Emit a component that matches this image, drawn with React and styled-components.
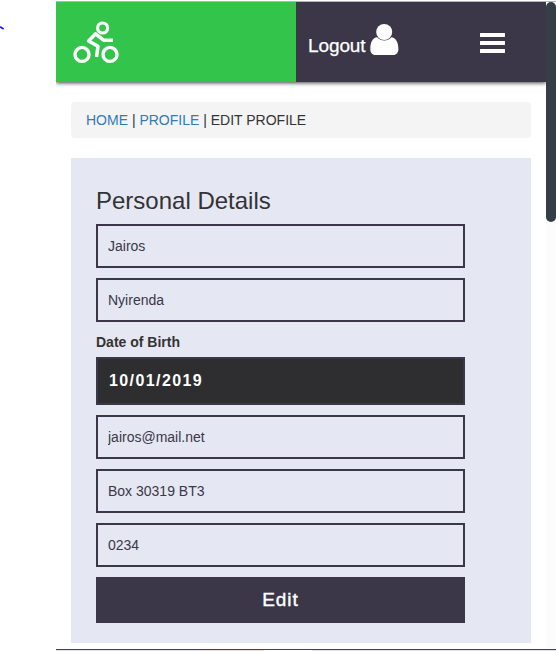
import React from "react";
import styled, { createGlobalStyle } from "styled-components";

const ink = "#3b3748";

const GlobalStyle = createGlobalStyle`
  *, *::before, *::after { box-sizing: border-box; }
  html, body { margin: 0; padding: 0; background: #fff; overflow: hidden; }
  body { font-family: "Liberation Sans", Arial, sans-serif; font-size: 14px; line-height: 20px; color: #333; }
`;

const Screen = styled.div`
  display: flex;
  width: 556px;
  height: 651px;
  overflow: hidden;
`;

const Gutter = styled.div`
  width: 56px;
  padding-top: 26px;
  svg { display: block; }
`;

const Viewport = styled.div`
  width: 500px;
  display: flex;
  flex-direction: column;
  border-top: 1px solid #fff;
`;

const Content = styled.div`
  display: flex;
  height: 648px;
  border-top: 1px solid #b5b5b7;
`;

const Page = styled.div`
  width: 490px;
`;

const Header = styled.header`
  display: flex;
  height: 80px;
  background: ${ink};
  box-shadow: 0 1px 4px rgba(0, 0, 0, 0.75);
  clip-path: inset(0 0 -10px 0);
`;

const Brand = styled.a`
  width: 240px;
  padding: 16px 0 0 16px;
  background: #33c44b;
`;

const Nav = styled.nav`
  flex: 1;
  display: flex;
  align-items: flex-start;
  justify-content: space-between;
  padding: 22px 41px 0 12px;
`;

const Logout = styled.a`
  display: flex;
  gap: 4px;
  color: #fff;
  font-size: 19px;
  line-height: 44px;
  letter-spacing: -0.1px;
  -webkit-text-stroke: 0.25px #fff;
`;

const MenuButton = styled.button`
  padding: 9px 0 0;
  border: 0;
  background: none;
  svg { display: block; }
`;

const Breadcrumb = styled.div`
  height: 36px;
  margin: 20px 15px 0;
  padding: 8px 15px;
  border-radius: 4px;
  background: #f4f4f4;
`;

const Crumb = styled.a`
  color: #337ab7;
`;

const Card = styled.section`
  height: 485px;
  margin: 20px 15px 0;
  padding: 30px 66px 0 25px;
  background: #e5e7f3;
`;

const Title = styled.h3`
  margin: 0 0 10px;
  font-size: 24px;
  font-weight: 400;
  line-height: 26px;
`;

const Field = styled.input`
  display: block;
  width: 100%;
  height: ${(p) => (p.$date ? 48 : 44)}px;
  margin: 0 0 10px;
  padding: 0 ${(p) => (p.$date ? 11 : 10)}px;
  border: 2px solid ${ink};
  border-radius: 0;
  outline: 0;
  background: ${(p) => (p.$date ? "#2e2e30" : "transparent")};
  color: ${(p) => (p.$date ? "#fff" : ink)};
  font-family: inherit;
  font-size: ${(p) => (p.$date ? 16 : 14)}px;
  font-weight: ${(p) => (p.$date ? 700 : 400)};
  letter-spacing: ${(p) => (p.$date ? "1.4px" : "0")};
`;

const Label = styled.label`
  display: block;
  height: 20px;
  margin-bottom: 5px;
  font-weight: 700;
`;

const Submit = styled.button`
  display: block;
  width: 100%;
  height: 46px;
  padding: 0;
  border: 0;
  background: ${ink};
  color: #fff;
  font: 400 19px/46px "Liberation Sans", Arial, sans-serif;
  letter-spacing: 1px;
  -webkit-text-stroke: 0.4px #fff;
`;

const Scrollbar = styled.div`
  width: 10px;
  background: #fcfcfc;
`;

const Thumb = styled.div`
  height: 220px;
  border-radius: 5px;
  background: #353d47;
`;

const BottomEdge = styled.div`
  height: 2px;
  border-top: 1px solid #46434f;
  background: linear-gradient(90deg, #e7e1ed 0 144px, #f3ddd8 144px 208px, #fff 208px 256px, #e3e1ef 256px) padding-box;
`;

const Cyclist = () => (
  <svg width="48" height="48" viewBox="72 18 48 48" fill="none" stroke="#fff">
    <circle cx="82" cy="54.4" r="7" strokeWidth="3.4" />
    <circle cx="110" cy="54.4" r="7" strokeWidth="3.4" />
    <circle cx="102.6" cy="28" r="5" strokeWidth="3.2" />
    <path d="M113 40.2H103.5L95.6 33.8L88.6 41L98 46.3L96.5 57" strokeWidth="3.5" strokeLinejoin="round" />
  </svg>
);

const Person = () => (
  <svg width="29" height="33" viewBox="0 0 29 33" fill="#fff">
    <circle cx="14.2" cy="8" r="8" />
    <path d="M7.1 13.3C2.8 13.7.3 18 .3 25.2C.3 28.5 2.3 31 5.3 31H23.3C26.3 31 28.4 28.5 28.4 25.2C28.4 18 25.6 13.7 21.3 13.3C17.4 17.7 11.2 17.7 7.1 13.3Z" />
  </svg>
);

export default function App() {
  return (
    <>
      <GlobalStyle />
      <Screen>
        <Gutter>
          <svg width="5" height="5" viewBox="0 0 5 5">
            <path d="M0 .8L3.6 3" stroke="#1717ff" strokeWidth="1.8" />
          </svg>
        </Gutter>
        <Viewport>
          <Content>
            <Page>
              <Header>
                <Brand><Cyclist /></Brand>
                <Nav>
                  <Logout>Logout <Person /></Logout>
                  <MenuButton aria-label="Menu">
                    <svg width="25" height="20" fill="#fff">
                      <rect width="25" height="4" rx=".5" />
                      <rect y="8" width="25" height="4" rx=".5" />
                      <rect y="16" width="25" height="4" rx=".5" />
                    </svg>
                  </MenuButton>
                </Nav>
              </Header>
              <Breadcrumb>
                <Crumb>HOME</Crumb> | <Crumb>PROFILE</Crumb> | EDIT PROFILE
              </Breadcrumb>
              <Card>
                <Title>Personal Details</Title>
                <Field defaultValue="Jairos" />
                <Field defaultValue="Nyirenda" />
                <Label htmlFor="dob">Date of Birth</Label>
                <Field id="dob" $date defaultValue="10/01/2019" />
                <Field defaultValue="jairos@mail.net" />
                <Field defaultValue="Box 30319 BT3" />
                <Field defaultValue="0234" />
                <Submit>Edit</Submit>
              </Card>
            </Page>
            <Scrollbar><Thumb /></Scrollbar>
          </Content>
          <BottomEdge />
        </Viewport>
      </Screen>
    </>
  );
}
